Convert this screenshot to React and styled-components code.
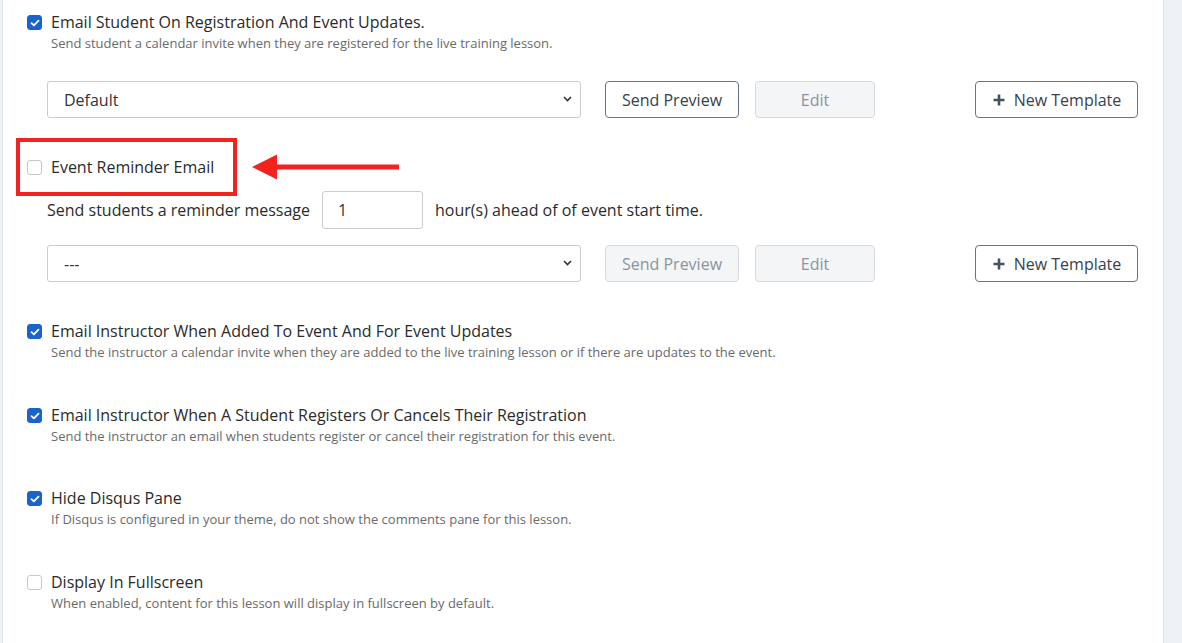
import styled, { createGlobalStyle } from 'styled-components';

const GlobalStyle = createGlobalStyle`
  html, body {
    margin: 0;
    padding: 0;
    background: #ffffff;
  }
  body {
    font-family: "Open Sans", "Noto Sans", "Liberation Sans", sans-serif;
    color: #2e2e2e;
  }
  * {
    box-sizing: border-box;
  }
`;

const Page = styled.div`
  display: flex;
  width: 1182px;
  height: 643px;
  overflow: hidden;
`;

const Gutter = styled.div`
  width: 3px;
  flex: none;
  background: #eef1f5;
  border-right: 1px solid #dfe3e8;
`;

const SideRail = styled.div`
  width: 19px;
  flex: none;
  background: #edf0f4;
  border-left: 1px solid #dce1e7;
`;

const Panel = styled.main`
  flex: 1;
  padding: 11px 0 0 24px;
`;

const OptionRow = styled.div`
  position: relative;
  display: flex;
  align-items: flex-start;
  gap: 9px;
  margin-top: ${(p) => p.$gap || 0}px;
`;

const Box = styled.span`
  flex: none;
  width: 15px;
  height: 15px;
  margin-top: 4px;
  border-radius: 3px;
  display: flex;
  align-items: center;
  justify-content: center;
  background: ${(p) => (p.$checked ? '#1b63cc' : '#ffffff')};
  border: 1px solid ${(p) => (p.$checked ? '#1b63cc' : '#c3c8cf')};
`;

const OptionText = styled.div`
  display: flex;
  flex-direction: column;
`;

const Title = styled.div`
  font-size: 16px;
  line-height: 22px;
  color: #2b2b2b;
`;

const Desc = styled.div`
  font-size: 13px;
  line-height: 20px;
  color: #6a6a6a;
`;

const TemplateRow = styled.div`
  display: flex;
  align-items: center;
  margin: ${(p) => p.$gap}px 25px 0 20px;
`;

const SelectWrap = styled.div`
  position: relative;
  width: 534px;
  height: 37px;
  margin-right: 24px;
`;

const Select = styled.select`
  appearance: none;
  width: 100%;
  height: 100%;
  border: 1px solid #c8cdd4;
  border-radius: 3px;
  background: #ffffff;
  padding: 0 36px 0 16px;
  font-family: inherit;
  font-size: 16px;
  color: #333333;
`;

const Chevron = styled.svg`
  position: absolute;
  right: 9px;
  top: 15px;
  pointer-events: none;
`;

const Button = styled.button`
  height: 37px;
  width: ${(p) => p.$w}px;
  margin-left: ${(p) => p.$ml || 0}px;
  display: inline-flex;
  align-items: center;
  justify-content: center;
  gap: 8px;
  border-radius: 4px;
  font-family: inherit;
  font-size: 16px;
  padding: 0;
  border: 1px solid ${(p) => (p.disabled ? '#d6dae0' : '#66768a')};
  background: ${(p) => (p.disabled ? '#f4f5f7' : '#ffffff')};
  color: ${(p) => (p.disabled ? '#8b939d' : '#38414c')};
`;

const Spacer = styled.div`
  flex: 1;
`;

const Highlight = styled.div`
  position: absolute;
  left: -11px;
  top: -18px;
  width: 221px;
  height: 58px;
  border: 4px solid #f2231f;
  pointer-events: none;
`;

const Arrow = styled.svg`
  position: absolute;
  left: 225px;
  top: -2px;
`;

const ReminderLine = styled.div`
  display: flex;
  align-items: center;
  gap: 12px;
  margin: 13px 0 0 20px;
  font-size: 16px;
  color: #2b2b2b;
`;

const HoursInput = styled.input`
  width: 101px;
  height: 38px;
  border: 1px solid #c8cdd4;
  border-radius: 3px;
  padding: 0 15px;
  font-family: inherit;
  font-size: 16px;
  color: #333333;
`;

const Check = () => (
  <svg width="10" height="8" viewBox="0 0 10 8">
    <path d="M1.5 4.2 L3.9 6.4 L8.5 1.6" fill="none" stroke="#ffffff" strokeWidth="1.8" strokeLinecap="round" strokeLinejoin="round" />
  </svg>
);

const Option = ({ checked, title, desc, gap, children }) => (
  <OptionRow $gap={gap}>
    <Box $checked={checked}>{checked && <Check />}</Box>
    <OptionText>
      <Title>{title}</Title>
      {desc && <Desc>{desc}</Desc>}
    </OptionText>
    {children}
  </OptionRow>
);

const Plus = () => (
  <svg width="14" height="14" viewBox="0 0 14 14">
    <path d="M7 1.5 V12.5 M1.5 7 H12.5" stroke="#46515e" strokeWidth="2.6" strokeLinecap="butt" />
  </svg>
);

const Templates = ({ value, disabled, gap }) => (
  <TemplateRow $gap={gap}>
    <SelectWrap>
      <Select defaultValue={value}>
        <option>{value}</option>
      </Select>
      <Chevron width="9" height="6" viewBox="0 0 9 6">
        <path d="M1 1 L4.5 4.5 L8 1" fill="none" stroke="#333" strokeWidth="1.6" />
      </Chevron>
    </SelectWrap>
    <Button $w={134} disabled={disabled}>Send Preview</Button>
    <Button $w={120} $ml={16} disabled>Edit</Button>
    <Spacer />
    <Button $w={163}>
      <Plus />
      New Template
    </Button>
  </TemplateRow>
);

export default function App() {
  return (
    <>
      <GlobalStyle />
      <Page>
        <Gutter />
        <Panel>
          <Option
            checked
            title="Email Student On Registration And Event Updates."
            desc="Send student a calendar invite when they are registered for the live training lesson."
          />
          <Templates value="Default" gap={28} />
          <Option title="Event Reminder Email" gap={38}>
            <Highlight />
            <Arrow width="148" height="26" viewBox="0 0 148 26">
              <path d="M0 13 L25 0.5 L25 10.5 L147 10.5 L147 15.5 L25 15.5 L25 25.5 Z" fill="#f2231f" />
            </Arrow>
          </Option>
          <ReminderLine>
            <span>Send students a reminder message</span>
            <HoursInput defaultValue="1" />
            <span>hour(s) ahead of of event start time.</span>
          </ReminderLine>
          <Templates value="---" disabled gap={16} />
          <Option
            checked
            gap={38}
            title="Email Instructor When Added To Event And For Event Updates"
            desc="Send the instructor a calendar invite when they are added to the live training lesson or if there are updates to the event."
          />
          <Option
            checked
            gap={42}
            title="Email Instructor When A Student Registers Or Cancels Their Registration"
            desc="Send the instructor an email when students register or cancel their registration for this event."
          />
          <Option
            checked
            gap={41}
            title="Hide Disqus Pane"
            desc="If Disqus is configured in your theme, do not show the comments pane for this lesson."
          />
          <Option
            gap={42}
            title="Display In Fullscreen"
            desc="When enabled, content for this lesson will display in fullscreen by default."
          />
        </Panel>
        <SideRail />
      </Page>
    </>
  );
}
